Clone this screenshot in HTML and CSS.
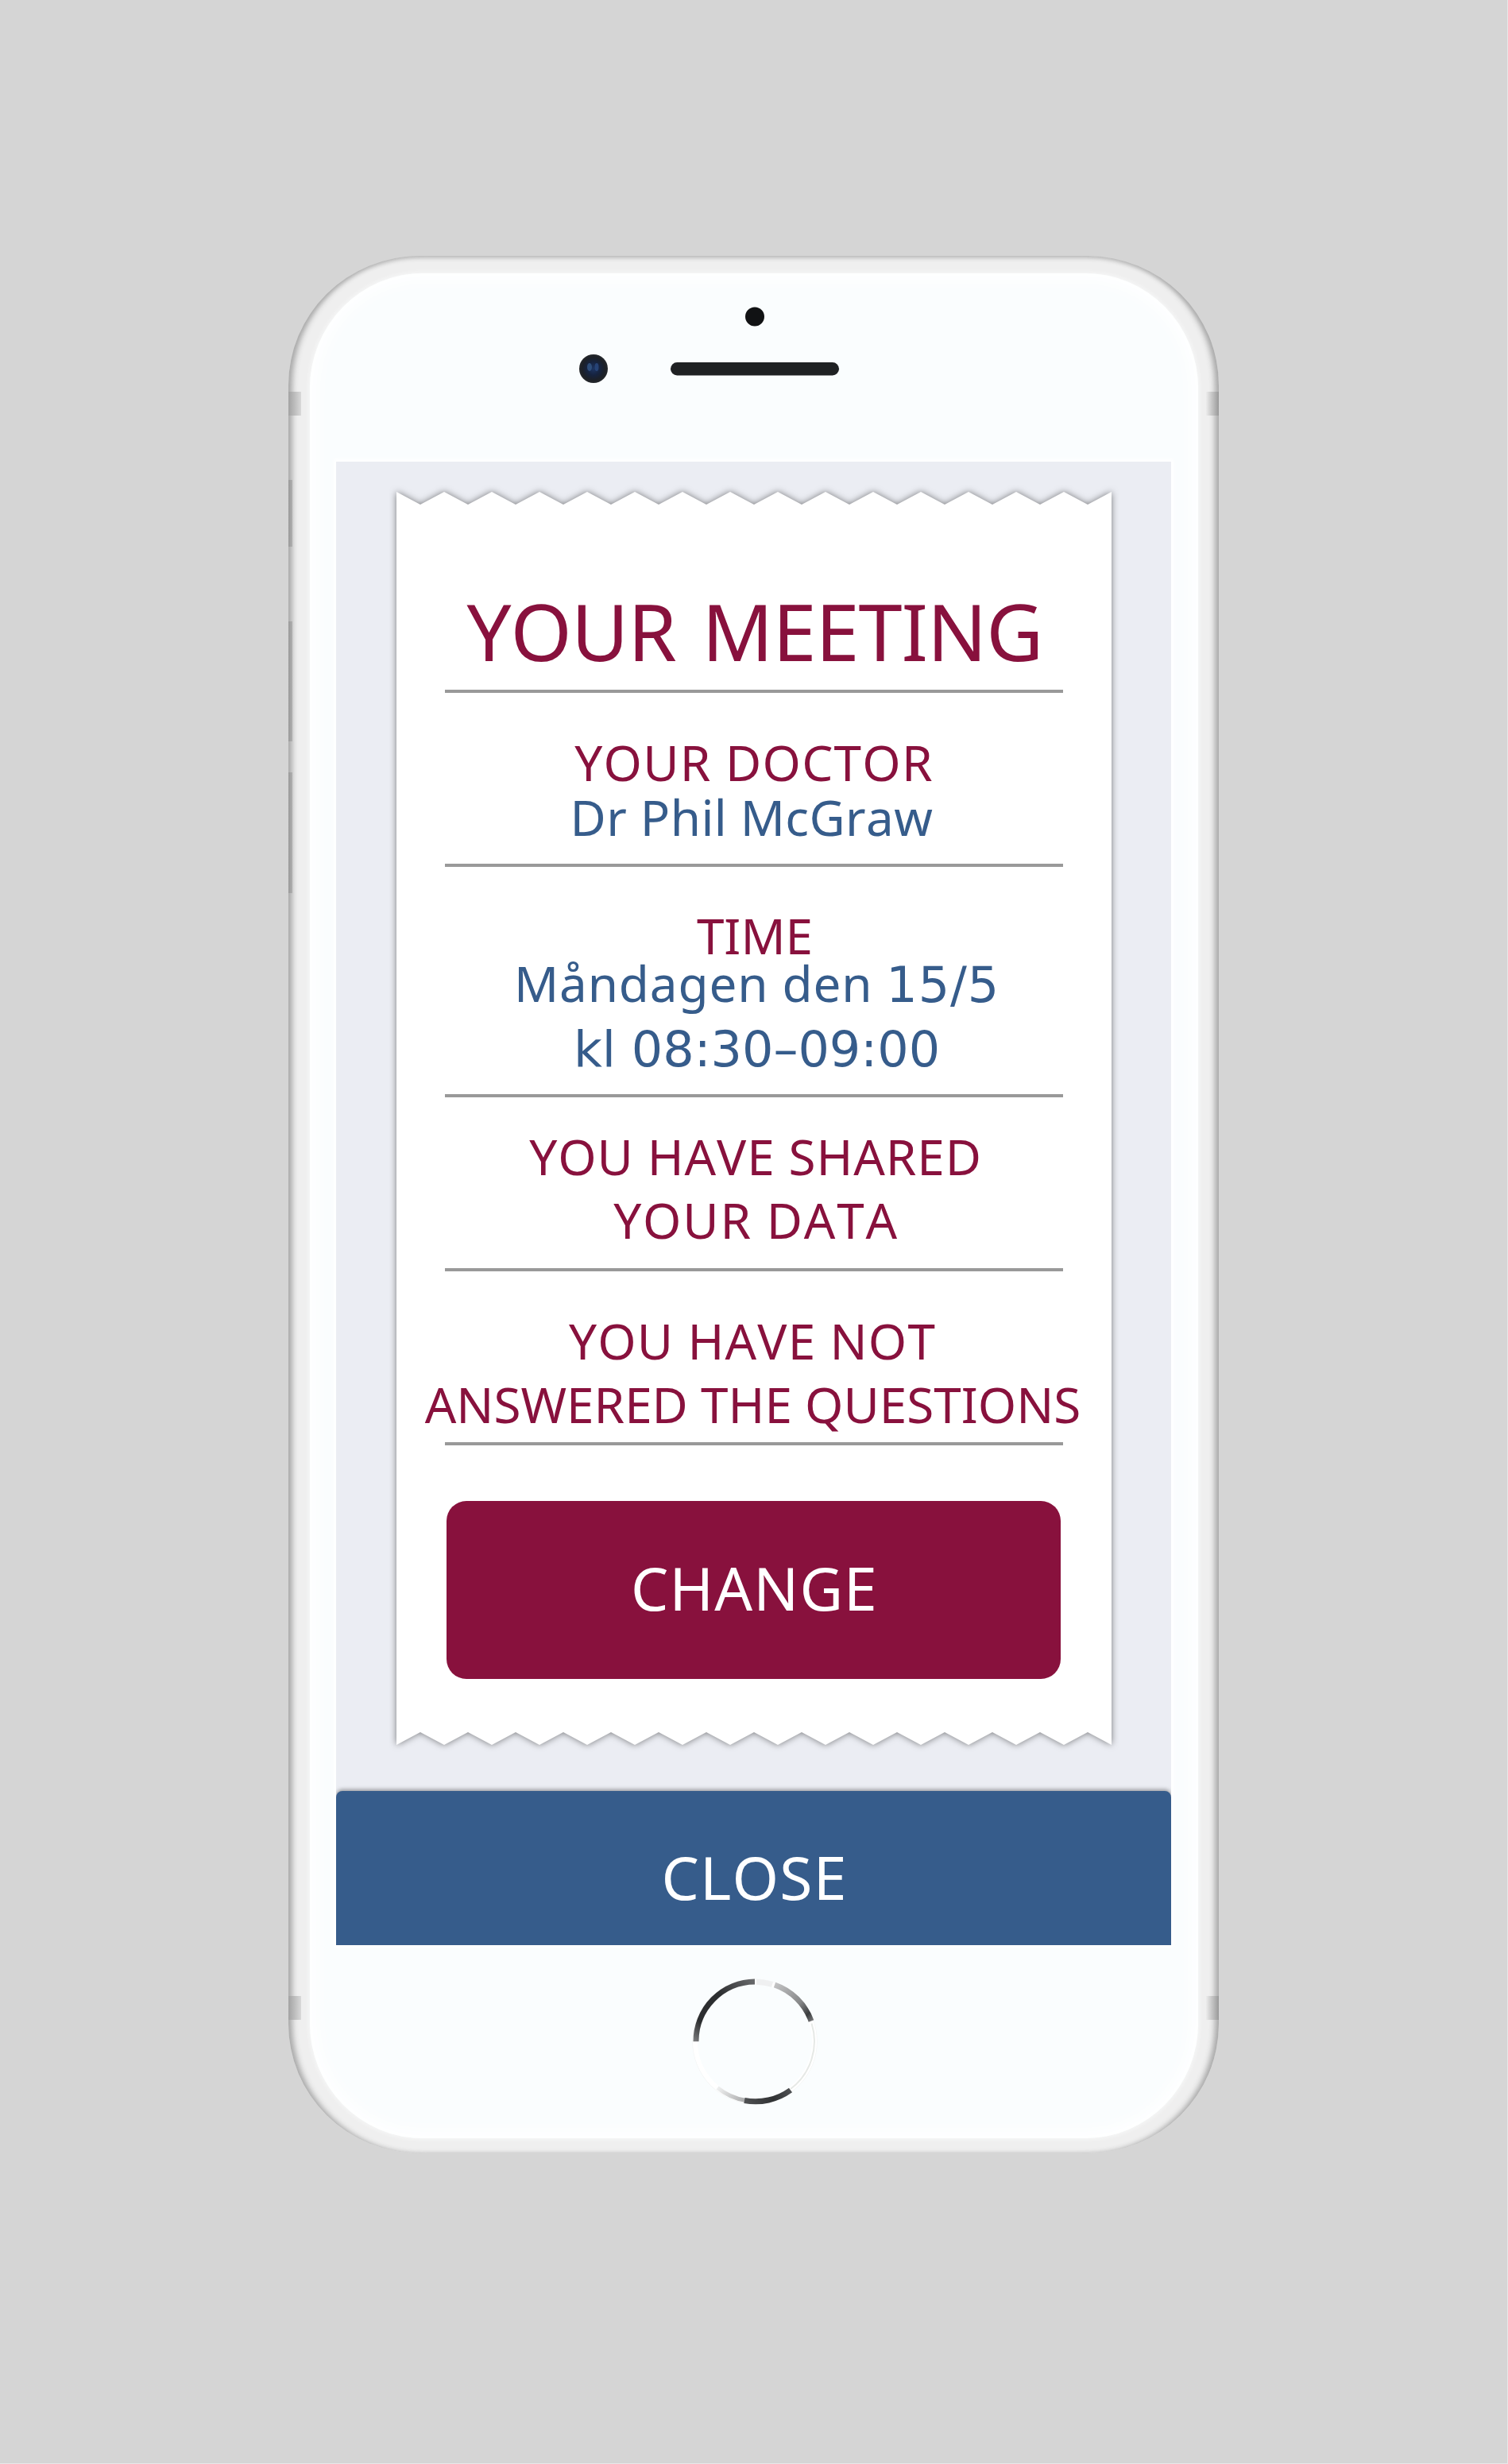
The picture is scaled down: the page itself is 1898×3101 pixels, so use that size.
FILE: index.html
```html
<!DOCTYPE html>
<html lang="en">
<head>
<meta charset="utf-8">
<title>Your meeting</title>
<link rel="stylesheet" href="styles.css">
</head>
<body>
<main class="phone">
  <span class="side-key key-mute"></span>
  <span class="side-key key-up"></span>
  <span class="side-key key-down"></span>
  <span class="antenna antenna-tl"></span>
  <span class="antenna antenna-tr"></span>
  <span class="antenna antenna-bl"></span>
  <span class="antenna antenna-br"></span>

  <svg class="sensors" viewBox="0 0 1171 259" aria-hidden="true">
    <defs>
      <radialGradient id="lens">
        <stop offset="0" stop-color="#1d3563"/>
        <stop offset=".45" stop-color="#16233f"/>
        <stop offset=".8" stop-color="#1c2027"/>
        <stop offset="1" stop-color="#24272b"/>
      </radialGradient>
    </defs>
    <circle cx="587" cy="76.500" r="12" fill="#111214"/>
    <circle cx="384" cy="142" r="18" fill="url(#lens)"/>
    <ellipse cx="379" cy="140" rx="3" ry="5" fill="#345786" opacity=".8"/>
    <ellipse cx="388" cy="140" rx="2.500" ry="5" fill="#2b4a80" opacity=".8"/>
    <rect x="481" y="134" width="212" height="16.500" rx="8.200" fill="#1f2123"/>
  </svg>

  <section class="screen">
    <article class="ticket">
      <svg class="paper" viewBox="0 0 900 1577" aria-hidden="true">
        <path fill="#fff" d="M0 0l30 16l30-16l30 16l30-16l30 16l30-16l30 16l30-16l30 16l30-16l30 16l30-16l30 16l30-16l30 16l30-16l30 16l30-16l30 16l30-16l30 16l30-16l30 16l30-16l30 16l30-16l30 16l30-16l30 16l30-16V1577l-30-16l-30 16l-30-16l-30 16l-30-16l-30 16l-30-16l-30 16l-30-16l-30 16l-30-16l-30 16l-30-16l-30 16l-30-16l-30 16l-30-16l-30 16l-30-16l-30 16l-30-16l-30 16l-30-16l-30 16l-30-16l-30 16l-30-16l-30 16l-30-16l-30 16z"/>
      </svg>
      <h1 class="title"><span class="t-meeting">YOUR MEETING</span></h1>
      <div class="block doctor">
        <h2 class="line"><span class="t-doctor">YOUR DOCTOR</span></h2>
        <p class="line value"><span class="t-name">Dr Phil McGraw</span></p>
      </div>
      <div class="block time">
        <h2 class="line"><span class="t-time">TIME</span></h2>
        <p class="line value"><span class="t-day">Måndagen den <span class="digits">15/5</span></span></p>
        <p class="line value"><span class="t-hour digits">kl 08:30–09:00</span></p>
      </div>
      <div class="block shared">
        <p class="line"><span class="t-shared">YOU HAVE SHARED</span></p>
        <p class="line"><span class="t-data">YOUR DATA</span></p>
      </div>
      <div class="block questions">
        <p class="line"><span class="t-not">YOU HAVE NOT</span></p>
        <p class="line"><span class="t-answered">ANSWERED THE QUESTIONS</span></p>
      </div>
      <button class="change"><span class="t-change">CHANGE</span></button>
    </article>
    <button class="close"><span class="t-close">CLOSE</span></button>
  </section>

  <div class="chin">
    <svg class="home" viewBox="0 0 200 200" fill="none" stroke-width="7" aria-hidden="true">
      <defs>
        <linearGradient id="arc-a" gradientUnits="userSpaceOnUse" x1="26" y1="99" x2="100" y2="24">
          <stop offset="0" stop-color="#77787a"/><stop offset=".2" stop-color="#2c2e30"/>
          <stop offset=".6" stop-color="#2c2e30"/><stop offset="1" stop-color="#68696b"/>
        </linearGradient>
        <linearGradient id="arc-b" gradientUnits="userSpaceOnUse" x1="125" y1="26" x2="172" y2="74">
          <stop offset="0" stop-color="#c4c5c6"/><stop offset=".6" stop-color="#858687"/>
          <stop offset=".85" stop-color="#3a3c3e"/><stop offset="1" stop-color="#77787a"/>
        </linearGradient>
        <linearGradient id="arc-c" gradientUnits="userSpaceOnUse" x1="52" y1="156" x2="88" y2="174">
          <stop offset="0" stop-color="#f2f3f3"/><stop offset="1" stop-color="#a9aaab"/>
        </linearGradient>
        <linearGradient id="arc-d" gradientUnits="userSpaceOnUse" x1="86" y1="174" x2="146" y2="160">
          <stop offset="0" stop-color="#505254"/><stop offset=".6" stop-color="#303234"/><stop offset="1" stop-color="#505254"/>
        </linearGradient>
      </defs>
      <circle cx="100" cy="99.300" r="78" stroke="#f4f6f6" stroke-width="1.500"/>
      <circle cx="100" cy="99.300" r="75" stroke="#fff" stroke-width="6"/>
      <path d="M171.500 76.500A75 75 0 0 1 145 159" stroke="#e6e9e6" stroke-width="2"/>
      <path d="M102 24.300A75 75 0 0 1 122 27.500" stroke="#eff0f1"/>
      <path d="M26 99.300A74.500 75 0 0 1 100 24" stroke="url(#arc-a)"/>
      <path d="M125 28A75 75 0 0 1 171 73.500" stroke="url(#arc-b)"/>
      <path d="M53 157.500A75 75 0 0 0 88 173.300" stroke="url(#arc-c)" stroke-width="5"/>
      <path d="M87 173.500A75 75 0 0 0 145 160.500" stroke="url(#arc-d)"/>
    </svg>
  </div>
</main>
</body>
</html>
```
FILE: styles.css
```css
* { box-sizing: border-box; margin: 0; padding: 0; }

body {
  min-height: 3101px;
  padding-top: 322px;
  border: solid #e8e8e8;
  border-width: 0 1px 1px 0;
  background: #d5d5d5;
  font-family: "Noto Sans", sans-serif;
}

.phone {
  position: relative;
  width: 1171px;
  height: 2388px;
  margin-left: 363px;
  border-radius: 165px / 163px;
  background: #efefef;
  box-shadow: inset 9px 0 7px -4px #a9a9a9, inset -9px 0 7px -4px #a9a9a9,
    inset 0 5px 5px -2px #c2c2c2, inset 0 -4px 5px -2px #dcdcdc;
}

.phone::before {
  content: "";
  position: absolute;
  inset: 22px 26px 19px 27px;
  border-radius: 142px / 145px;
  background: #fafdfe;
  box-shadow: 0 0 6px #fbfcfc, inset 0 0 22px 8px #fff;
}

.side-key,
.antenna { position: absolute; }

.side-key {
  left: 0;
  width: 5px;
  background: linear-gradient(90deg, #999, #b0b0b0);
}
.key-mute { top: 282px; height: 84px; }
.key-up { top: 460px; height: 151px; }
.key-down { top: 650px; height: 152px; }

.antenna { width: 16px; height: 30px; }
.antenna-tl { top: 171px; left: 0; background: linear-gradient(90deg, #a2a2a2, #d9d9d9); }
.antenna-bl { top: 2190px; left: 0; background: linear-gradient(90deg, #a2a2a2, #d9d9d9); }
.antenna-tr { top: 171px; right: 0; background: linear-gradient(270deg, #999, #ececec); }
.antenna-br { top: 2190px; right: 0; background: linear-gradient(270deg, #999, #ececec); }

.sensors {
  position: relative;
  display: block;
  width: 1171px;
  height: 259px;
}

.screen {
  position: relative;
  width: 1051px;
  height: 1867px;
  margin-left: 60px;
  padding: 38px 75px 0 76px;
  background: #ebedf3;
  box-shadow: 0 0 5px 3px #fff;
}

.ticket {
  position: relative;
  width: 900px;
  height: 1577px;
  padding: 115px 61px 0;
}

.paper {
  position: absolute;
  inset: 0;
  width: 900px;
  height: 1577px;
  overflow: visible;
  filter: drop-shadow(0 0 4px rgba(0, 0, 0, .5));
}

.title,
.block,
.change {
  position: relative;
  text-align: center;
  white-space: nowrap;
  font-weight: 400;
  color: #88113d;
  font-kerning: none;
}

.title {
  height: 134px;
  font-size: 99px;
  line-height: 120px;
}

.block {
  display: flex;
  flex-direction: column;
  align-items: center;
  gap: 20px;
  height: 219px;
  border-top: 4px solid #999;
}
.doctor { gap: 9px; padding-top: 57px; }
.time { gap: 0; height: 290px; padding-top: 56px; }
.time .line + .line + .line { margin-top: 21px; }
.shared { padding-top: 44px; }
.questions { height: 223px; padding-top: 57px; border-bottom: 4px solid #999; }

.line {
  font-size: 62px;
  font-weight: 400;
  line-height: 60px;
}
.value { color: #365c8b; }
.digits { font-family: "DejaVu Sans", sans-serif; line-height: 0; }

/* Tracking and optical centring of each line */
.t-meeting { margin-left: 2px; letter-spacing: -1px; word-spacing: 8px; }
.t-doctor { letter-spacing: 1.25px; }
.t-name { margin-right: 6px; letter-spacing: .4px; }
.t-time { margin-left: 2px; }
.t-day { margin-left: 7px; letter-spacing: .85px; }
.t-hour { margin-left: 7px; }
.t-shared { margin-left: 4px; letter-spacing: .9px; }
.t-data { margin-left: 5px; letter-spacing: 1.8px; }
.t-not { margin-right: 4px; letter-spacing: 1.15px; }
.t-answered { margin-right: 3px; }
.t-change { margin-left: 2px; letter-spacing: 1.1px; }
.t-close { margin-left: 2px; letter-spacing: 1.2px; }

button {
  display: flex;
  align-items: center;
  justify-content: center;
  border: 0;
  color: #fff;
  font-family: inherit;
  font-size: 75px;
  font-kerning: none;
}

.change {
  width: 773px;
  height: 224px;
  margin: 70px 0 0 2px;
  padding-bottom: 6px;
  border-radius: 25px;
  background: #88113d;
  color: #fff;
}

.close {
  position: relative;
  width: 1051px;
  height: 194px;
  margin: 58px 0 0 -76px;
  padding-top: 22px;
  border-radius: 8px 8px 0 0;
  background: #365c8b;
  box-shadow: 0 -2px 5px rgba(0, 0, 0, .35);
  clip-path: inset(-12px 0 0 0);
}

.chin {
  position: relative;
  display: flex;
  padding: 22px 0 0 487px;
}
.home { width: 200px; height: 200px; }
```
